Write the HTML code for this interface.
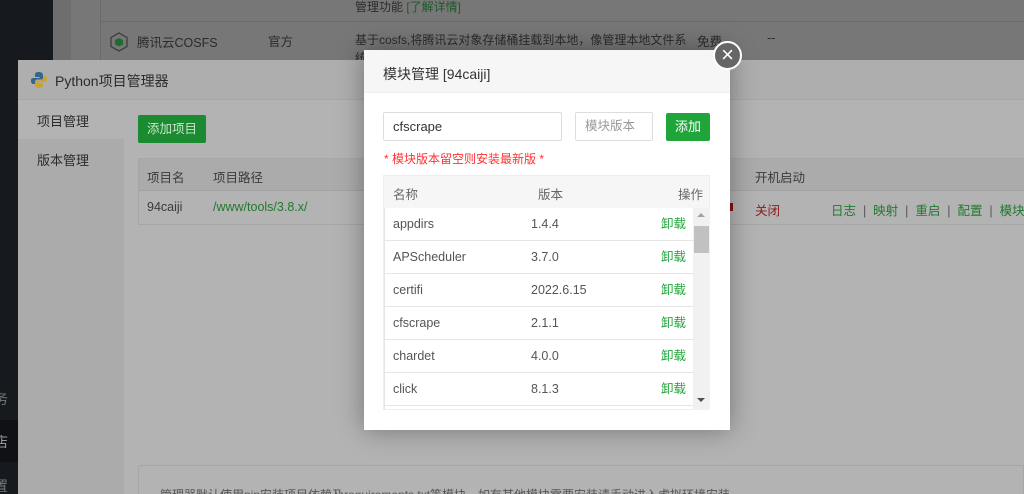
<!DOCTYPE html>
<html style="overflow:hidden;height:494px"><head><meta charset="utf-8"><style>
*{margin:0;padding:0;box-sizing:border-box}
body{width:1024px;height:494px;overflow:hidden;position:relative;background:#777;font-family:"Liberation Sans","Noto Sans CJK SC",sans-serif;font-size:12px;color:#333}
.a{position:absolute;white-space:nowrap}
.r{height:33px;border-bottom:1px solid #e6e6e6;position:relative;font-size:12.5px;color:#555}
.r span{position:absolute;top:0;line-height:32px}
</style></head><body>
<div class="a" style="left:0;top:0;width:53px;height:494px;background:#16191d"></div>
<div class="a" style="left:0;top:420px;width:18px;height:42px;background:#0f1114"></div>
<div class="a" style="left:-6px;top:389px;color:#777;font-size:14px">务</div>
<div class="a" style="left:-6px;top:432px;color:#999;font-size:14px">店</div>
<div class="a" style="left:-6px;top:476px;color:#777;font-size:14px">置</div>
<div class="a" style="left:53px;top:0;width:18px;height:60px;background:#6e6e6e"></div>
<div class="a" style="left:100px;top:0;width:924px;height:60px;border-left:1px solid #6a6a6a"></div>
<div class="a" style="left:100px;top:21px;width:924px;height:1px;background:#6a6a6a"></div>
<div class="a" style="left:355px;top:-2px;color:#2b2b2b;font-size:12px">管理功能 <span style="color:#1c5a28">[了解详情]</span></div>
<svg class="a" style="left:110px;top:32px" width="18" height="20" viewBox="0 0 18 20"><polygon points="9,1 17,5.5 17,14.5 9,19 1,14.5 1,5.5" fill="none" stroke="#3a3a3a" stroke-width="1.2"/><polygon points="9,6 13,8 13,12.5 9,14.5 5,12.5 5,8" fill="#1f6e30"/></svg>
<div class="a" style="left:137px;top:32px;color:#2b2b2b;font-size:12.5px">腾讯云COSFS</div>
<div class="a" style="left:268px;top:31px;color:#2b2b2b;font-size:12.5px">官方</div>
<div class="a" style="left:355px;top:31px;color:#2b2b2b;font-size:12px">基于cosfs,将腾讯云对象存储桶挂载到本地，像管理本地文件系</div>
<div class="a" style="left:355px;top:49px;color:#2b2b2b;font-size:12px">统一样管理腾讯云对象存储文件</div>
<div class="a" style="left:697px;top:31px;color:#2b2b2b;font-size:12.5px">免费</div>
<div class="a" style="left:767px;top:31px;color:#2b2b2b;font-size:12.5px">--</div>
<div class="a" style="left:18px;top:60px;width:1006px;height:434px;background:#b3b3b3"></div>
<div class="a" style="left:18px;top:60px;width:1006px;height:40px;background:#aeaeae;border-bottom:1px solid #a6a6a6"></div>
<svg class="a" style="left:30px;top:71px" width="18" height="18" viewBox="0 0 18 18"><path d="M9 1C5 1 5 2.5 5 4v2h4.5v1H3C1 7 1 9 1 10s.5 3 2 3h2v-2c0-1.5 1-2.5 2.5-2.5h4c1 0 1.5-.5 1.5-1.5V4c0-2-2-3-4-3z" fill="#36648b"/><path d="M9 17c4 0 4-1.5 4-3v-2H8.5v-1H15c2 0 2-2 2-3s-.5-3-2-3h-2v2c0 1.5-1 2.5-2.5 2.5h-4C5.5 9.5 5 10 5 11v3c0 2 2 3 4 3z" fill="#c9a62b"/></svg>
<div class="a" style="left:55px;top:71px;color:#2b2b2b;font-size:14px">Python项目管理器</div>
<div class="a" style="left:18px;top:101px;width:106px;height:393px;background:#ababab"></div>
<div class="a" style="left:18px;top:101px;width:106px;height:38px;background:#b3b3b3"></div>
<div class="a" style="left:37px;top:111px;color:#2b2b2b;font-size:13px">项目管理</div>
<div class="a" style="left:37px;top:150px;color:#2b2b2b;font-size:13px">版本管理</div>
<div class="a" style="left:138px;top:115px;width:68px;height:28px;background:#1b8a30;border-radius:2px;color:#c8e6cc;font-size:12.5px;text-align:center;line-height:28px">添加项目</div>
<div class="a" style="left:138px;top:158px;width:886px;height:67px;border:1px solid #a6a6a6;border-right:none"></div>
<div class="a" style="left:139px;top:159px;width:885px;height:32px;background:#ababab;border-bottom:1px solid #a2a2a2"></div>
<div class="a" style="left:147px;top:167px;color:#3a3a3a;font-size:12.5px">项目名</div>
<div class="a" style="left:213px;top:167px;color:#3a3a3a;font-size:12.5px">项目路径</div>
<div class="a" style="left:755px;top:167px;color:#3a3a3a;font-size:12.5px">开机启动</div>
<div class="a" style="left:147px;top:200px;color:#3a3a3a;font-size:12.5px">94caiji</div>
<div class="a" style="left:213px;top:200px;color:#1f7a2e;font-size:12.5px">/www/tools/3.8.x/</div>
<div class="a" style="left:730px;top:203px;width:3px;height:8px;background:#8a0f0f"></div>
<div class="a" style="left:755px;top:200px;color:#8c1a1a;font-size:12.5px">关闭</div>
<div class="a" style="left:831px;top:200px;color:#1f7a2e;font-size:12.5px">日志 <span style="color:#555">&nbsp;|&nbsp;</span> 映射 <span style="color:#555">&nbsp;|&nbsp;</span> 重启 <span style="color:#555">&nbsp;|&nbsp;</span> 配置 <span style="color:#555">&nbsp;|&nbsp;</span> 模块 <span style="color:#555">&nbsp;|</span></div>
<div class="a" style="left:138px;top:465px;width:886px;height:29px;border:1px solid #a6a6a6;border-bottom:none;border-radius:3px 0 0 0;overflow:hidden"><div class="a" style="left:21px;top:20px;color:#555;font-size:12px">管理器默认使用pip安装项目依赖及requirements.txt等模块，如有其他模块需要安装请手动进入虚拟环境安装</div></div>
<div class="a" style="left:364px;top:50px;width:366px;height:380px;background:#fff;box-shadow:0 0 25px rgba(0,0,0,.35)"></div>
<div class="a" style="left:364px;top:50px;width:366px;height:43px;background:#f6f6f6;border-bottom:1px solid #eee"></div>
<div class="a" style="left:383px;top:64px;color:#333;font-size:14px">模块管理 [94caiji]</div>
<div class="a" style="left:713px;top:41px;width:29px;height:29px;border-radius:50%;background:#666;border:2px solid #fff;color:#fff;font-size:22px;line-height:24px;text-align:center">×</div>
<div class="a" style="left:383px;top:112px;width:179px;height:29px;border:1px solid #ddd;border-radius:2px;padding-left:9px;line-height:27px;font-size:13px;color:#333">cfscrape</div>
<div class="a" style="left:575px;top:112px;width:78px;height:29px;border:1px solid #ddd;border-radius:2px;padding-left:9px;line-height:27px;font-size:12.5px;color:#999">模块版本</div>
<div class="a" style="left:666px;top:113px;width:44px;height:28px;background:#20a53a;border-radius:2px;color:#fff;font-size:13px;text-align:center;line-height:28px">添加</div>
<div class="a" style="left:384px;top:150px;color:#f33;font-size:12px">* 模块版本留空则安装最新版 *</div>
<div class="a" style="left:383px;top:175px;width:327px;height:235px;border:1px solid #eee"></div>
<div class="a" style="left:384px;top:176px;width:325px;height:32px;background:#f6f6f6"></div>
<div class="a" style="left:393px;top:184px;color:#666;font-size:12.5px">名称</div>
<div class="a" style="left:538px;top:184px;color:#666;font-size:12.5px">版本</div>
<div class="a" style="left:678px;top:184px;color:#666;font-size:12.5px">操作</div>
<div class="a" style="left:693px;top:208px;width:17px;height:202px;background:#f1f1f1"></div>
<div class="a" style="left:694px;top:226px;width:15px;height:27px;background:#c1c1c1"></div>
<div class="a" style="left:697px;top:213px;width:0;height:0;border:4px solid transparent;border-bottom:4px solid #a3a3a3;border-top:0"></div>
<div class="a" style="left:697px;top:398px;width:0;height:0;border:4px solid transparent;border-top:4px solid #505050;border-bottom:0"></div>
<div class="a" style="left:384px;top:208px;width:309px;height:202px;overflow:hidden;border-left:1px solid #e6e6e6">
 <div class="r"><span style="left:8px">appdirs</span><span style="left:146px">1.4.4</span><span style="left:276px;color:#20a53a">卸载</span></div>
 <div class="r"><span style="left:8px">APScheduler</span><span style="left:146px">3.7.0</span><span style="left:276px;color:#20a53a">卸载</span></div>
 <div class="r"><span style="left:8px">certifi</span><span style="left:146px">2022.6.15</span><span style="left:276px;color:#20a53a">卸载</span></div>
 <div class="r"><span style="left:8px">cfscrape</span><span style="left:146px">2.1.1</span><span style="left:276px;color:#20a53a">卸载</span></div>
 <div class="r"><span style="left:8px">chardet</span><span style="left:146px">4.0.0</span><span style="left:276px;color:#20a53a">卸载</span></div>
 <div class="r"><span style="left:8px">click</span><span style="left:146px">8.1.3</span><span style="left:276px;color:#20a53a">卸载</span></div>
</div>
</body></html>
